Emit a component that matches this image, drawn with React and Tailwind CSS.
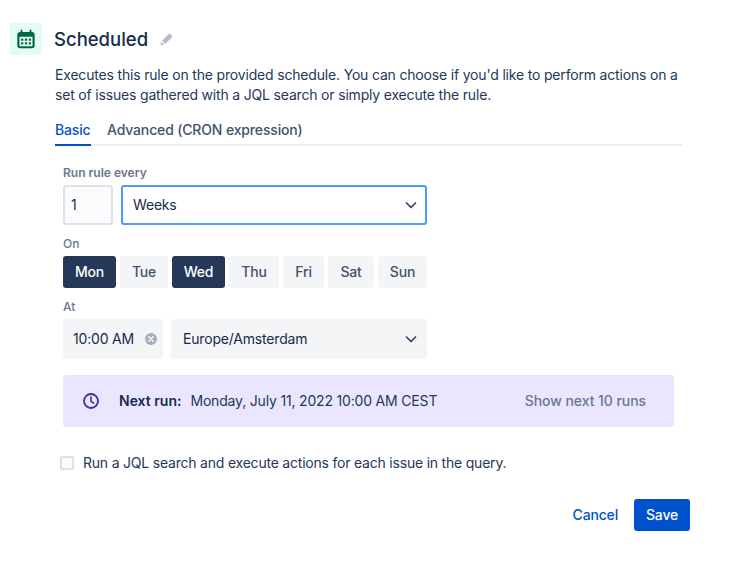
import React from 'react';

const DAYS = [
  { label: 'Mon', w: 'w-[53px]', on: true },
  { label: 'Tue', w: 'w-[48px]' },
  { label: 'Wed', w: 'w-[53px]', on: true },
  { label: 'Thu', w: 'w-[50px]' },
  { label: 'Fri', w: 'w-[41px]' },
  { label: 'Sat', w: 'w-[46px]' },
  { label: 'Sun', w: 'w-[49px]' },
];

function Chevron() {
  return (
    <svg width="24" height="24" viewBox="0 0 24 24" className="text-[#344563]">
      <path d="M7.500 10l4.500 4.500 4.500-4.500" fill="none" stroke="currentColor" strokeWidth="1.700" strokeLinecap="round" strokeLinejoin="round" />
    </svg>
  );
}

export default function App() {
  return (
    <div className="w-[738px] h-[561px] bg-white text-[#172b4d] text-sm tracking-[-0.18px] font-['Inter',sans-serif] antialiased pt-[23px] pl-[10px] overflow-hidden">
      {/* Header */}
      <div className="flex items-center h-8">
        <div className="w-8 h-8 rounded-[3px] bg-[#e3fcef] flex items-center justify-center">
          <svg width="26" height="26" viewBox="0 0 24 24">
            <path fill="#006644" d="M7 3.500h1.600v2H15.400v-2H17v2h.5A2.500 2.500 0 0 1 20 8v10a2.500 2.500 0 0 1-2.500 2.500h-11A2.500 2.500 0 0 1 4 18V8a2.500 2.500 0 0 1 2.500-2.500H7z" />
            <path fill="#e3fcef" d="M6 10h12v8a.6.6 0 0 1-.6.6H6.600A.6.6 0 0 1 6 18z" />
            <path fill="#006644" d="M7.500 11.500h2v2h-2zM11 11.500h2v2h-2zM14.500 11.500h2v2h-2zM7.500 15h2v2h-2zM11 15h2v2h-2zM14.500 15h2v2h-2z" />
          </svg>
        </div>
        <h1 className="ml-3 text-[18.500px] tracking-normal font-medium text-[#172b4d] leading-8">Scheduled</h1>
        <svg width="14" height="14" viewBox="0 0 14 14" className="ml-[12px]">
          <path fill="#b3bac5" d="M9.500 1.300l3.200 3.200-7.500 7.500-3.200-3.200zM1.300 9.700l3 3-3.900.9z" />
        </svg>
      </div>

      {/* Body */}
      <div className="ml-[45px] w-[627px]">
        <p className="mt-[10px] leading-5 text-[#253858]">
          Executes this rule on the provided schedule. You can choose if you'd like to perform actions on a set of issues gathered with a JQL search or simply execute the rule.
        </p>

        {/* Tabs */}
        <div className="mt-[15px] flex border-b-2 border-[#ebecf0] h-[26px]">
          <div className="h-[26px] font-medium text-[#0052cc] border-b-2 border-[#0052cc] leading-[20px] w-[36px]">Basic</div>
          <div className="ml-[16px] font-medium text-[#42526e] tracking-[-0.15px] leading-[20px]">Advanced (CRON expression)</div>
        </div>

        {/* Form */}
        <div className="ml-[8px] w-[611px]">
          <div className="mt-[19px] text-xs tracking-normal font-semibold text-[#6b778c] leading-4">Run rule every</div>
          <div className="mt-[4px] flex gap-2 w-[364px]">
            <div className="w-[50px] h-10 rounded-[3px] border-2 border-[#dfe1e6] bg-[#fafbfc] flex items-center pl-[6px]">1</div>
            <div className="flex-1 h-10 rounded-[3px] border-2 border-[#4c9aff] bg-white flex items-center justify-between pl-[10px] pr-[2px]">
              <span>Weeks</span>
              <Chevron />
            </div>
          </div>

          <div className="mt-[11px] text-xs tracking-normal font-medium text-[#6b778c] leading-4">On</div>
          <div className="mt-[4px] flex gap-1">
            {DAYS.map(d => (
              <div
                key={d.label}
                className={`${d.w} h-8 rounded-[3px] flex items-center justify-center font-medium ${d.on ? 'bg-[#253858] text-white' : 'bg-[#f4f5f7] text-[#42526e]'}`}
              >
                {d.label}
              </div>
            ))}
          </div>

          <div className="mt-[11px] text-xs tracking-normal font-medium text-[#6b778c] leading-4">At</div>
          <div className="mt-[4px] flex gap-2 w-[364px]">
            <div className="w-[100px] h-10 rounded-[3px] bg-[#f4f5f7] flex items-center justify-between pl-[10px] pr-[5px]">
              <span>10:00 AM</span>
              <svg width="14" height="14" viewBox="0 0 14 14">
                <circle cx="7" cy="7" r="6" fill="#a5adba" />
                <path d="M4.900 4.900l4.200 4.200M9.100 4.900l-4.200 4.200" stroke="#f4f5f7" strokeWidth="1.500" strokeLinecap="round" />
              </svg>
            </div>
            <div className="flex-1 h-10 rounded-[3px] bg-[#f4f5f7] flex items-center justify-between pl-3 pr-[4px]">
              <span>Europe/Amsterdam</span>
              <Chevron />
            </div>
          </div>

          {/* Next run */}
          <div className="mt-4 h-[52px] rounded-[3px] bg-[#eae6ff] flex items-center pl-[19px] pr-[28px]">
            <svg width="18" height="18" viewBox="0 0 18 18">
              <circle cx="9" cy="9" r="7" fill="none" stroke="#403294" strokeWidth="1.800" />
              <path d="M9 5v4.300l2.600 1.900" fill="none" stroke="#403294" strokeWidth="1.600" strokeLinecap="round" strokeLinejoin="round" />
            </svg>
            <span className="ml-[19px] font-semibold tracking-normal">Next run:</span>
            <span className="ml-[9px] text-[#253858]">Monday, July 11, 2022 10:00 AM CEST</span>
            <span className="ml-auto font-medium tracking-[-0.06px] text-[#6b778c]">Show next 10 runs</span>
          </div>
        </div>

        {/* Checkbox */}
        <div className="mt-[26px] flex items-center h-5 ml-[5px]">
          <div className="w-[14px] h-[14px] rounded-[2px] border-2 border-[#dfe1e6] bg-[#fafbfc]"></div>
          <span className="ml-[9px] tracking-[-0.21px] text-[#253858]">Run a JQL search and execute actions for each issue in the query.</span>
        </div>

        {/* Actions */}
        <div className="mt-[26px] flex items-center justify-end w-[635px]">
          <span className="font-medium text-[#0052cc]">Cancel</span>
          <div className="ml-[16px] w-[56px] h-8 rounded-[3px] bg-[#0052cc] text-white font-medium flex items-center justify-center">Save</div>
        </div>
      </div>
    </div>
  );
}
